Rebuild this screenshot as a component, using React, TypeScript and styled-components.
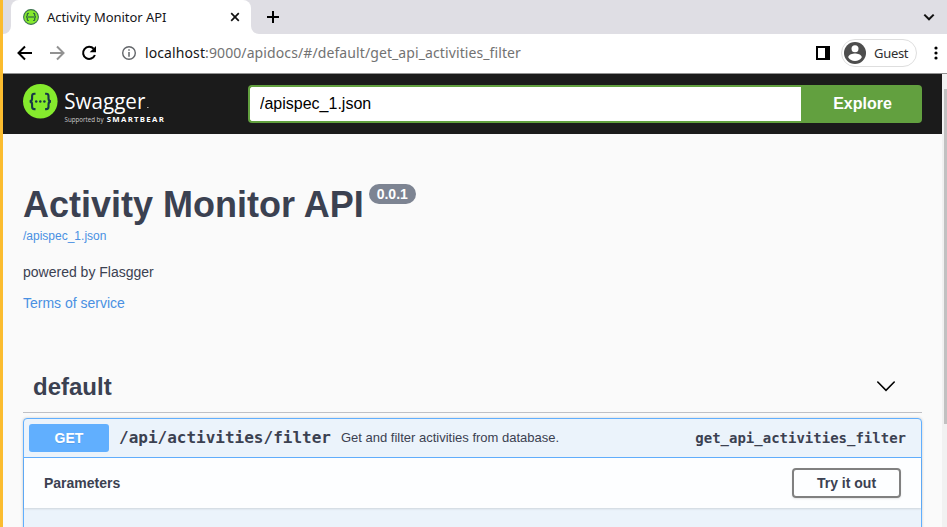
import React from 'react';
import styled, { createGlobalStyle } from 'styled-components';

const GlobalStyle = createGlobalStyle`
  *, *::before, *::after { box-sizing: border-box; }
  body { margin: 0; overflow: hidden; background: #fafafa; }
  button, input { font: inherit; margin: 0; }
  svg { display: block; flex: none; }
`;

const sans = `'Liberation Sans', Arial, sans-serif`;
const mono = `'DejaVu Sans Mono', monospace`;
const ui = `'Noto Sans', sans-serif`;

const Window = styled.div`
  width: 947px;
  height: 527px;
  overflow: hidden;
  display: flex;
  flex-direction: column;
  border-left: 3px solid #fbbc2f;
  background: #fafafa;
  color: #3b4151;
  font-family: ${sans};
`;

const TabStrip = styled.header`
  display: flex;
  flex: none;
  height: 34px;
  background: #dfdee4;
  font-family: ${ui};
`;

const StripEdge = styled.div`
  width: 8px;
  background: #fff;
  &::before {
    content: '';
    display: block;
    height: 34px;
    background: #dfdee4;
    border-bottom-right-radius: 8px;
  }
`;

const Tab = styled.div`
  display: flex;
  align-items: center;
  width: 240px;
  height: 34px;
  padding: 0 9px 0 12px;
  background: #fff;
  border-radius: 8px 8px 0 0;
`;

const TabTitle = styled.span`
  flex: 1;
  margin-left: 8px;
  font-size: 13px;
  line-height: 18px;
  letter-spacing: -0.04px;
  color: #151519;
`;

const StripRest = styled.div`
  flex: 1;
  background: #fff;
`;

const StripFill = styled.div`
  display: flex;
  align-items: center;
  justify-content: space-between;
  height: 34px;
  padding: 0 12px 0 15px;
  background: #dfdee4;
  border-bottom-left-radius: 8px;
`;

const Toolbar = styled.div`
  display: flex;
  align-items: center;
  flex: none;
  height: 40px;
  padding: 0 9px 1px 14px;
  background: #fff;
  border-bottom: 1px solid #929292;
  font-family: ${ui};
`;

const NavButtons = styled.div`
  display: flex;
  gap: 16px;
`;

const Address = styled.div`
  display: flex;
  align-items: center;
  flex: 1;
  margin-left: 24px;
  gap: 8px;
  font-size: 14px;
  line-height: 20px;
  letter-spacing: 0.1px;
  color: #727272;
`;

const Host = styled.span`
  color: #161616;
`;

const Profile = styled.div`
  display: flex;
  align-items: center;
  gap: 8px;
  width: 76px;
  height: 28px;
  margin: 0 17px 0 11px;
  padding: 0 0 1px 2px;
  border: 1px solid #dedede;
  border-radius: 14px;
  font-size: 13px;
  line-height: 18px;
  color: #303030;
  letter-spacing: -0.3px;
`;

const Viewport = styled.div`
  display: flex;
  flex: 1;
  min-height: 0;
`;

const Page = styled.main`
  flex: 1;
  min-width: 0;
`;

const Scrollbar = styled.aside`
  width: 5px;
  padding: 15px 0 0 2px;
  background: #f1f1f1;
`;

const ScrollThumb = styled.div`
  height: 335px;
  background: #c1c1c1;
`;

const Topbar = styled.div`
  display: flex;
  align-items: center;
  height: 60px;
  padding: 0 20px;
  background: #1b1b1b;
`;

const SearchForm = styled.form`
  display: flex;
  flex: 1;
  margin-left: 81px;
  height: 38px;
`;

const SpecInput = styled.input`
  flex: 1;
  min-width: 0;
  height: 38px;
  padding: 0 10px 1px;
  border: 2px solid #62a03f;
  border-right: 0;
  border-radius: 4px 0 0 4px;
  outline: none;
  background: #fff;
  color: #000;
  font-family: ${sans};
  font-size: 16px;
`;

const ExploreButton = styled.button`
  width: 121px;
  height: 38px;
  padding: 0 0 1px 2px;
  border: 0;
  border-radius: 0 4px 4px 0;
  background: #62a03f;
  color: #fff;
  font: bold 16px ${sans};
`;

const Info = styled.section`
  padding: 50px 20px 0;
`;

const TitleRow = styled.div`
  display: flex;
  align-items: flex-start;
  height: 44px;
`;

const Title = styled.h1`
  margin: 0;
  font-size: 36px;
  line-height: 42px;
  white-space: nowrap;
`;

const Version = styled.span`
  height: 20px;
  margin: 0 0 0 5px;
  padding: 0 8px;
  border-radius: 10px;
  background: #7d8492;
  color: #fff;
  font-size: 14px;
  font-weight: bold;
  line-height: 20px;
`;

const Link = styled.a<{ $small?: boolean }>`
  display: block;
  font-size: ${(p) => (p.$small ? 12 : 14)}px;
  line-height: 16px;
  color: #4990e2;
`;

const Description = styled.p`
  margin: 20px 0 15px;
  font-size: 14px;
  line-height: 16px;
`;

const TagHeader = styled.h2`
  display: flex;
  align-items: center;
  justify-content: space-between;
  height: 52px;
  margin: 50px 20px 5px;
  padding: 0 27px 0 10px;
  border-bottom: 1px solid #bfc0c5;
  font-size: 24px;
  line-height: 28px;
`;

const Operation = styled.section`
  height: 200px;
  margin: 0 20px;
  border: 1px solid #61affe;
  border-radius: 4px;
  background: #ebf3fb;
  box-shadow: 0 0 3px rgba(0, 0, 0, 0.19);
`;

const Summary = styled.div`
  display: flex;
  align-items: center;
  height: 39px;
  padding: 0 15px 0 5px;
  border-bottom: 1px solid #61affe;
`;

const Method = styled.span`
  width: 80px;
  height: 28px;
  border-radius: 3px;
  background: #61affe;
  color: #fff;
  font-size: 14px;
  font-weight: bold;
  line-height: 28px;
  text-align: center;
  text-shadow: 0 1px 0 rgba(0, 0, 0, 0.1);
`;

const Path = styled.span`
  margin: 0 10px;
  font: bold 16px/20px ${mono};
`;

const SummaryText = styled.span`
  flex: 1;
  padding-bottom: 1px;
  font-size: 13px;
`;

const OperationId = styled.span`
  font: bold 14px/20px ${mono};
`;

const SectionHeader = styled.div`
  display: flex;
  align-items: center;
  justify-content: space-between;
  height: 50px;
  padding: 0 20px;
  background: rgba(255, 255, 255, 0.87);
  box-shadow: 0 1px 2px rgba(0, 0, 0, 0.13);
`;

const SectionTitle = styled.h4`
  margin: 0;
  font-size: 14px;
`;

const TryButton = styled.button`
  width: 109px;
  height: 30px;
  padding: 0;
  border: 2px solid #808080;
  border-radius: 4px;
  background: transparent;
  box-shadow: 0 1px 2px rgba(0, 0, 0, 0.1);
  color: #3b4151;
  font: bold 14px ${sans};
`;

const Braces = ({ color, width }: { color: string; width: number }) => (
  <g fill="none" stroke={color} strokeWidth={width}>
    <path d="M12.7 9.7h-1.2c-1.6 0-2.2.8-2.2 2.3v2.4c0 1.7-.7 2.7-2.3 3 1.6.3 2.3 1.3 2.3 3v2.4c0 1.5.6 2.3 2.2 2.3h1.2" />
    <path d="M22.3 9.7h1.2c1.6 0 2.2.8 2.2 2.3v2.4c0 1.7.7 2.7 2.3 3-1.6.3-2.3 1.3-2.3 3v2.4c0 1.5-.6 2.3-2.2 2.3h-1.2" />
  </g>
);

const Favicon = () => (
  <svg width="16" height="16" viewBox="0 0 35 35">
    <circle cx="17.5" cy="17.5" r="16.2" fill="#85ea2d" stroke="#3f7254" strokeWidth="2.4" />
    <Braces color="#285e43" width={2.6} />
    <path d="M11 17.5h13" stroke="#285e43" strokeWidth="2.4" />
  </svg>
);

const SwaggerLogo = () => (
  <svg width="144" height="42" viewBox="0 0 144 42">
    <g transform="translate(0 1)">
      <circle cx="17.3" cy="17.3" r="17.3" fill="#85ea2d" />
      <g transform="translate(-.2 0)">
        <Braces color="#173647" width={2.1} />
        <g fill="#173647">
          <circle cx="13.4" cy="17.4" r="1.25" />
          <circle cx="17.5" cy="17.4" r="1.25" />
          <circle cx="21.6" cy="17.4" r="1.25" />
        </g>
      </g>
    </g>
    <text x="41.3" y="25.5" fill="#fff" fontFamily="'Open Sans'" fontSize="22.5" fontWeight="400" textLength="81" lengthAdjust="spacingAndGlyphs">Swagger</text>
    <path d="M124 24.5h1.6" stroke="#aaa" />
    <text x="41.5" y="39" fill="#ccc" fontFamily="'Open Sans'" fontSize="6.6" textLength="39" lengthAdjust="spacingAndGlyphs">Supported by</text>
    <text x="83.8" y="39" fill="#fff" fontFamily="'Open Sans'" fontSize="7.8" fontWeight="700" textLength="57" lengthAdjust="spacing">SMARTBEAR</text>
  </svg>
);

const CloseIcon = () => (
  <svg width="14" height="14" viewBox="0 0 14 14" stroke="#111" strokeWidth="1.7"><path d="m3.2 3.2 7.6 7.6M10.8 3.2l-7.6 7.6" /></svg>
);
const PlusIcon = () => (
  <svg width="14" height="14" viewBox="0 0 14 14" stroke="#000" strokeWidth="2"><path d="M7 1v12M1 7h12" /></svg>
);
const TabListIcon = () => (
  <svg width="12" height="12" viewBox="0 0 12 12" fill="none" stroke="#111" strokeWidth="2"><path d="m1.3 3.6 4.7 4.7 4.7-4.7" /></svg>
);
const ArrowIcon = ({ forward }: { forward?: boolean }) => (
  <svg width="16" height="16" viewBox="0 0 16 16" fill="none" stroke={forward ? '#929292' : '#000'} strokeWidth="2">
    <path d={forward ? 'M1 8h13M8 1.5 14.5 8 8 14.5' : 'M15 8H2M8 1.5 1.5 8 8 14.5'} />
  </svg>
);
const ReloadIcon = () => (
  <svg width="16" height="16" viewBox="0 0 16 16">
    <path d="M12.7 3.7A6.1 6.1 0 1 0 13.9 10" fill="none" stroke="#000" strokeWidth="2" />
    <path d="M15 1v6.3H8.7Z" fill="#000" />
  </svg>
);
const InfoIcon = () => (
  <svg width="16" height="16" viewBox="0 0 16 16">
    <circle cx="8" cy="8" r="6.3" fill="none" stroke="#626569" strokeWidth="1.4" />
    <path d="M8 7v4.7M8 4.2v1.6" stroke="#626569" strokeWidth="1.5" />
  </svg>
);
const PanelIcon = () => (
  <svg width="14" height="14" viewBox="0 0 14 14"><path fill="#000" fillRule="evenodd" d="M0 0h14v14H0ZM2 2v10h7V2Z" /></svg>
);
const AvatarIcon = () => (
  <svg width="22" height="22" viewBox="0 0 22 22">
    <circle cx="11" cy="11" r="11" fill="#4d4d4d" />
    <circle cx="11" cy="6.8" r="3.5" fill="#fff" />
    <path d="M4.2 15.2c.4-2.5 4.5-3.6 6.8-3.6s6.4 1.1 6.8 3.6A8 8 0 0 1 11 19a8 8 0 0 1-6.8-3.8Z" fill="#fff" />
  </svg>
);
const MenuIcon = () => (
  <svg width="4" height="14" viewBox="0 0 4 14"><circle cx="2" cy="2" r="1.6" /><circle cx="2" cy="7" r="1.6" /><circle cx="2" cy="12" r="1.6" /></svg>
);
const SectionArrow = () => (
  <svg width="18" height="12" viewBox="0 0 18 12" fill="none" stroke="#000" strokeWidth="1.6" strokeLinecap="round"><path d="M.8 1 9 9.3 17.2 1" /></svg>
);

export default function App() {
  return (
    <Window>
      <GlobalStyle />
      <TabStrip>
        <StripEdge />
        <Tab>
          <Favicon />
          <TabTitle>Activity Monitor API</TabTitle>
          <CloseIcon />
        </Tab>
        <StripRest>
          <StripFill>
            <PlusIcon />
            <TabListIcon />
          </StripFill>
        </StripRest>
      </TabStrip>
      <Toolbar>
        <NavButtons>
          <ArrowIcon />
          <ArrowIcon forward />
          <ReloadIcon />
        </NavButtons>
        <Address>
          <InfoIcon />
          <span><Host>localhost</Host>:9000/apidocs/#/default/get_api_activities_filter</span>
        </Address>
        <PanelIcon />
        <Profile><AvatarIcon />Guest</Profile>
        <MenuIcon />
      </Toolbar>
      <Viewport>
        <Page>
          <Topbar>
            <SwaggerLogo />
            <SearchForm>
              <SpecInput defaultValue="/apispec_1.json" />
              <ExploreButton type="button">Explore</ExploreButton>
            </SearchForm>
          </Topbar>
          <Info>
            <TitleRow>
              <Title>Activity Monitor API</Title>
              <Version>0.0.1</Version>
            </TitleRow>
            <Link $small>/apispec_1.json</Link>
            <Description>powered by Flasgger</Description>
            <Link>Terms of service</Link>
          </Info>
          <TagHeader>default<SectionArrow /></TagHeader>
          <Operation>
            <Summary>
              <Method>GET</Method>
              <Path>/api/activities/filter</Path>
              <SummaryText>Get and filter activities from database.</SummaryText>
              <OperationId>get_api_activities_filter</OperationId>
            </Summary>
            <SectionHeader>
              <SectionTitle>Parameters</SectionTitle>
              <TryButton>Try it out</TryButton>
            </SectionHeader>
          </Operation>
        </Page>
        <Scrollbar><ScrollThumb /></Scrollbar>
      </Viewport>
    </Window>
  );
}
